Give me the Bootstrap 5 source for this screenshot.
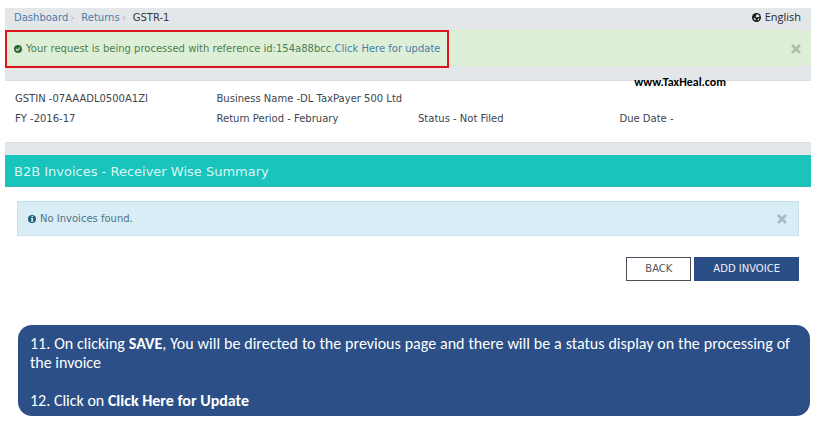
<!DOCTYPE html>
<html lang="en">
<head>
<meta charset="utf-8">
<meta name="viewport" content="width=device-width, initial-scale=1">
<title>GSTR-1 - B2B Invoices</title>
<link rel="stylesheet" href="https://cdn.jsdelivr.net/npm/bootstrap@5.3.0/dist/css/bootstrap.min.css">
<style>
body { font-family: Verdana, "DejaVu Sans", sans-serif; font-size: 10px; line-height: 20px; color: #40444c; background: #fff; }
a { color: #4a7cab; text-decoration: none; }
.portal { margin: 8px 7px 0 5px; background: #e4e7ea; }
.topbar { height: 22px; padding: 0 10px 0 9px; }
.breadcrumb { --bs-breadcrumb-font-size: 10px; --bs-breadcrumb-divider-color: #b8bcc0; --bs-breadcrumb-item-active-color: #33373e; }
.breadcrumb-item + .breadcrumb-item { padding-left: 7px; }
.breadcrumb-item + .breadcrumb-item::before { content: ""; width: 4px; height: 4px; margin: 8px 8px 0 -6px; padding: 0; border: solid #c3c7cb; border-width: 1px 1px 0 0; transform: rotate(45deg); }
.language { font-family: "Open Sans", sans-serif; font-size: 11px; color: #25282e; line-height: 18px; }
.notice { border-width: 1px; border-radius: 0; font-size: 10px; line-height: 20px; }
.notice-ok { min-height: 36px; background: #deefd8; border-color: #d8eacb; border-width: 1px 0; color: #4c7d4d; padding: 1px 10px 0 9px; }
.notice-info { min-height: 35px; background: #d9edf6; border-color: #c2e3eb; color: #4c7385; padding: 0 11px 0 10px; }
.dismiss { color: inherit; line-height: 0; }
.highlight { position: absolute; left: 0; top: -1px; width: 444px; height: 38px; border: 2px solid #dc151c; pointer-events: none; }
.taxpayer { margin-top: 14px; padding: 8px 0 13px; background: #fff; border: solid #dcdedf; border-width: 1px 0; }
.taxpayer .row { --bs-gutter-x: 20px; }
.watermark { position: absolute; right: 85px; top: -9px; font: bold 12px/20px Carlito, Lato, sans-serif; color: #000; }
.section-title { margin: 0; background: #19c4bc; border-bottom: 1px solid #35b3ac; color: #d9f7f4; font-size: 13px; font-weight: 400; line-height: 29px; padding: 2px 9px 0; }
.summary { background: #fff; padding: 14px 12px 44px; }
.action { border-radius: 0; font-size: 10px; line-height: 20px; padding: 1px 18px; }
.actions { gap: 3px; margin-top: 21px; }
.action-back { border: 1px solid #4b4e58; background: #fff; color: #50535b; }
.action-add { border: 1px solid #2b4d85; background: #2b4d85; color: #eef3fa; }
.instructions { margin: 0 8px 0 18px; padding: 9px 20px 6px 12px; background: #2b4f86; border-radius: 14px; color: #fff; font-family: Carlito, Lato, sans-serif; font-size: 16px; line-height: 19px; text-align: justify; }
</style>
<script src="https://cdn.jsdelivr.net/npm/bootstrap@5.3.0/dist/js/bootstrap.bundle.min.js" defer></script>
</head>
<body>
<main class="portal">
  <header class="topbar d-flex justify-content-between align-items-start">
    <nav aria-label="Breadcrumb">
      <ol class="breadcrumb mb-0">
        <li class="breadcrumb-item"><a href="#">Dashboard</a></li>
        <li class="breadcrumb-item"><a href="#">Returns</a></li>
        <li class="breadcrumb-item active" aria-current="page">GSTR-1</li>
      </ol>
    </nav>
    <span class="language d-flex align-items-center gap-1">
      <svg width="9" height="9" viewBox="0 0 18 18" aria-hidden="true"><circle cx="9" cy="9" r="9" fill="#17191c"/><path fill="#dfe3e6" d="M9 2l5 2 1 3-3 2-2-1-2 1-1-3 2-1zM3 9l4 2 1 4-4-2zM12 11l3 0-2 4-2-1z"/></svg>
      English
    </span>
  </header>

  <div class="alert notice notice-ok d-flex align-items-center m-0 position-relative" role="alert">
    <svg class="me-1" width="8" height="8" viewBox="0 0 16 16" aria-hidden="true"><circle cx="8" cy="8" r="8" fill="#2f6a35"/><path d="M4 8l3 3 5-6" fill="none" stroke="#deefd8" stroke-width="2.2"/></svg>
    <span>Your request is being processed with reference id:154a88bcc.<a href="#">Click Here for update</a></span>
    <button type="button" class="dismiss btn p-0 border-0 ms-auto" aria-label="Close" data-bs-dismiss="alert">
      <svg width="10" height="10" viewBox="0 0 10 10" aria-hidden="true"><path d="M1 1l8 8M9 1l-8 8" stroke="#b0bfac" stroke-width="2.6"/></svg>
    </button>
    <span class="highlight" aria-hidden="true"></span>
  </div>

  <section class="taxpayer position-relative">
    <span class="watermark">www.TaxHeal.com</span>
    <div class="row mx-0">
      <div class="col-3">GSTIN -07AAADL0500A1ZI</div>
      <div class="col-9">Business Name -DL TaxPayer 500 Ltd</div>
      <div class="col-3">FY -2016-17</div>
      <div class="col-3">Return Period - February</div>
      <div class="col-3">Status - Not Filed</div>
      <div class="col-3">Due Date -</div>
    </div>
  </section>

  <div class="pt-2 pb-1"></div>
  <h1 class="section-title">B2B Invoices - Receiver Wise Summary</h1>
  <section class="summary">
    <div class="alert notice notice-info d-flex align-items-center mb-0" role="alert">
      <svg class="me-1" width="8" height="8" viewBox="0 0 16 16" aria-hidden="true"><circle cx="8" cy="8" r="8" fill="#28617f"/><path d="M7 2h3v2.5H7zM6 6h4v5h1v2H6v-2h1V8H6z" fill="#d9edf6"/></svg>
      <span>No Invoices found.</span>
      <button type="button" class="dismiss btn p-0 border-0 ms-auto" aria-label="Close" data-bs-dismiss="alert">
        <svg width="10" height="10" viewBox="0 0 10 10" aria-hidden="true"><path d="M1 1l8 8M9 1l-8 8" stroke="#a6bac3" stroke-width="2.6"/></svg>
      </button>
    </div>
    <div class="actions d-flex justify-content-end">
      <button type="button" class="btn action action-back">BACK</button>
      <button type="button" class="btn action action-add">ADD INVOICE</button>
    </div>
  </section>
</main>

<aside class="instructions">
  <p class="mb-0">11. On clicking <strong>SAVE</strong>, You will be directed to the previous page and there will be a status display on the processing of the invoice</p>
  <br>
  <p class="mb-0">12. Click on <strong>Click Here for Update</strong></p>
</aside>
</body>
</html>
